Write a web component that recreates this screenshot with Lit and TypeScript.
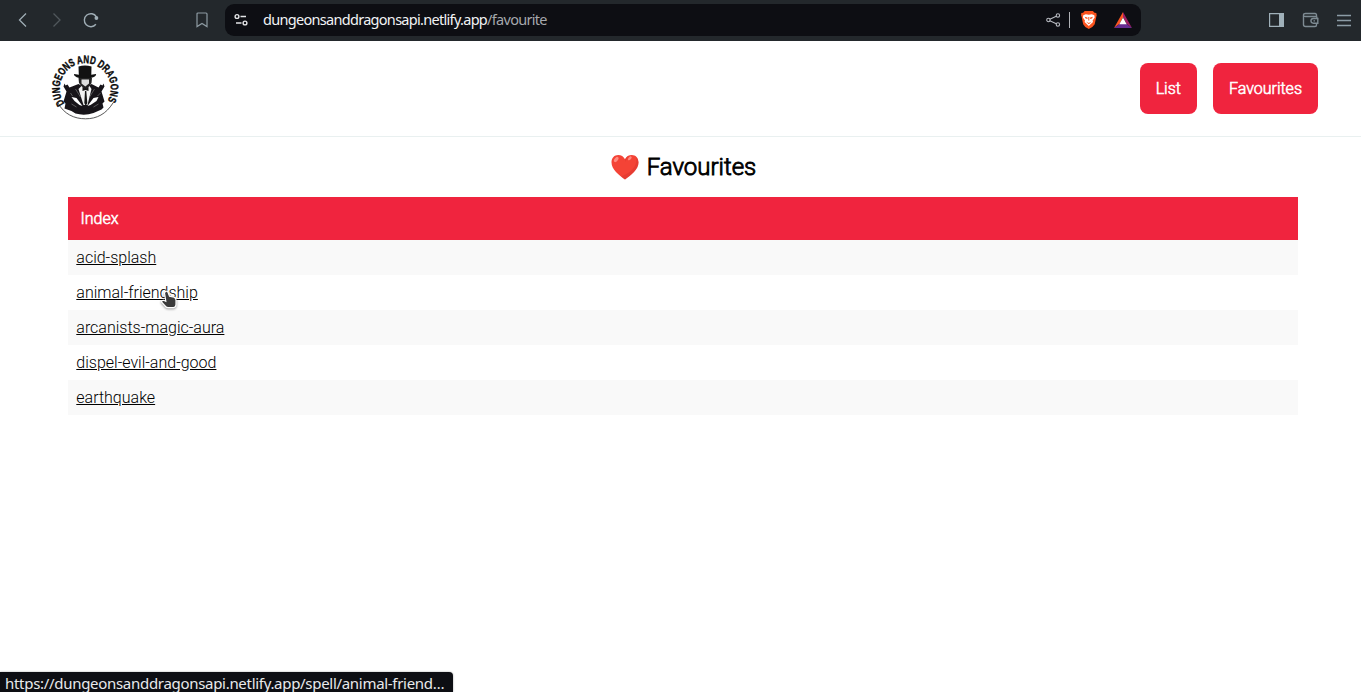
import { LitElement, html, css } from "lit";
import { customElement, property } from "lit/decorators.js";

@customElement("browser-bar")
class BrowserBar extends LitElement {
  static styles = css`
    :host { display: block; }
    .bar { height: 41px; box-sizing: border-box; background: #23282c; display: flex; align-items: center; padding: 0 9px 1px 15px; color: #9fadb5; }
    svg { display: block; flex: none; overflow: visible; }
    .nav { display: flex; gap: 18px; flex: none; }
    .mark { margin-left: 94px; }
    .address { margin-left: 15px; width: 916px; height: 32px; box-sizing: border-box; border-radius: 9px; background: #0d0e13; display: flex; align-items: center; padding: 0 9px 0 8px; flex: none; }
    .url { margin-left: 14px; font: 14.500px/20px "Noto Sans", sans-serif; letter-spacing: -0.7px; color: #f2f3f5; white-space: nowrap; flex: 1; padding-bottom: 2px; }
    .path { color: #a5a8ad; }
    .rule { width: 1px; height: 16px; background: #b0b2b6; margin: 0 11px 0 8px; }
    .vpn { margin-left: 16px; }
    .tools { display: flex; margin-left: auto; gap: 18px; }
  `;
  render() {
    return html`<div class="bar">
      <div class="nav">
        <svg width="16" height="16" fill="none" stroke="#9fadb5" stroke-width="1.3"><path d="M11 1.500 4.500 8l6.500 6.500"/></svg>
        <svg width="16" height="16" fill="none" stroke="#50575c" stroke-width="1.3"><path d="m4.500 1.500 6.500 6.500-6.500 6.500"/></svg>
        <svg width="17" height="16" fill="none" stroke="#9fadb5" stroke-width="1.4"><path d="M12.900 12.300a6.500 6.500 0 1 1 .5-7.500"/><circle cx="13.400" cy="6" r="1.900" fill="#9fadb5" stroke="none"/></svg>
      </div>
      <svg class="mark" width="16" height="16" fill="none" stroke="#8d9aa2" stroke-width="1.2"><path d="M4 1h8q1 0 1 1v12.600L8 11.400l-5 3.200V2q0-1 1-1Z"/></svg>
      <div class="address">
        <svg width="16" height="16" fill="none" stroke="#e4e5e7" stroke-width="1.400"><circle cx="4" cy="4.500" r="1.900"/><path d="M7.500 4.500H13M3 11h5.500"/><circle cx="12" cy="11" r="1.900"/></svg>
        <div class="url">dungeonsanddragonsapi.netlify.app<span class="path">/favourite</span></div>
        <svg width="16" height="16" fill="none" stroke="#b7bac0" stroke-width="1.100"><path d="m4.800 7.200 6.500-3M4.800 8.800l6.500 3"/><circle cx="3.400" cy="8" r="1.700"/><circle cx="12.900" cy="3.500" r="1.700"/><circle cx="12.900" cy="12.500" r="1.700"/></svg>
        <span class="rule"></span>
        <svg width="17" height="18" viewBox="0.7 0 17 18"><path d="m4.400 0-1.600 1.700L1 2 .8 4.400l.5 1.300 1.600 7.500L5 15.900 8.500 18l3.500-2.100 2.400-2.700L16 5.700l.4-1.300L16 2l-1.800-.3L12.600 0Z" fill="#fb541f"/><path d="M5.500 3.200 3 4.200 2.600 6.500l2.100 3-.4 1.600 4.200 3.900 4.200-3.900-.4-1.600 2.100-3L14 4.200l-2.500-1-3 .6Z" fill="#fff"/><path d="m4.400 5.700 2.700.8.2 1.600-2-.5ZM12.600 5.700l-2.700.8-.2 1.600 2-.5ZM5.700 10.500l2.800 1.500 2.800-1.500-2.800 2.800ZM8 6h1v3.500H8Z" fill="#fb541f"/></svg>
        <svg class="vpn" width="18" height="16"><path d="M9 0v5.300L5.400 12 0 16Z" fill="#fb5522"/><path d="m9 0 9 16-5.300-4L9 5.300Z" fill="#9e1f63"/><path d="M0 16 5.400 12h7.300L18 16Z" fill="#662d91"/><path d="m9 5.500 3.700 6.700H5.300Z" fill="#fff"/></svg>
      </div>
      <div class="tools">
        <svg width="16" height="16"><path d="M1.600 1.600h13.800v12.800H1.600Z" fill="none" stroke="#9fb0b9" stroke-width="1.200"/><path d="M11 1h5v14h-5Z" fill="#9fb0b9"/></svg>
        <svg width="16" height="16" fill="none" stroke="#7e8b93" stroke-width="1.400"><path d="M14.500 4.500V3q0-1.500-1.500-1.500H3.500Q1.500 1.500 1.500 3v9.500q0 2 2 2H13q1.500 0 1.500-1.500v-1.800M1.500 3.200q0 1.300 2 1.300H14q1 0 1 1.500v.5M15.800 6.500h-4.500a2.300 2.300 0 0 0 0 4.700h4.500ZM11.500 8.900H13"/></svg>
        <svg width="16" height="16" stroke="#8c9ca6" stroke-width="1.300"><path d="M1 3.500h14M1 8.500h14M1 13.500h14"/></svg>
      </div>
    </div>`;
  }
}

@customElement("guild-logo")
class GuildLogo extends LitElement {
  static styles = css`
    :host { display: block; }
    svg { display: block; overflow: visible; }
    .name { font: 800 11px "Liberation Sans", sans-serif; fill: #080808; stroke: #080808; stroke-width: 0.4px; }
  `;
  render() {
    return html`<svg width="80" height="76" viewBox="0 0 80 76">
      <path d="M13 52C19 63 29 67.800 40.500 67.800S61 63 68 52" fill="none" stroke="#444" stroke-width=".9"/>
      <path id="arc" d="M19.500 52.500A25.500 25.500 0 1 1 61 52.500" fill="none"/>
      <text class="name"><textPath href="#arc" textLength="108" lengthAdjust="spacingAndGlyphs">DUNGEONS AND DRAGONS</textPath></text>
      <g transform="translate(-.5 -3)">
      <path d="M34 18.500q6.500-1.800 13 0l-.2 8.300 4.600-.8q1 1.600-2.700 3.200-8 3-16.500 0-3.500-1.700-2.500-3.200l4.600.8Z" fill="#111"/>
      <path d="m34 30 .5 5 3 4 3 1.500 4-1.500 2.500-4 .5-5Z" fill="#222"/>
      <path d="M37 31.500h7.500v4l-3.700 3-3.800-3Z" fill="#ddd"/>
      <path d="m34 36-9 3.500-2-3-2 1-1-2-1 3 3 5-3 10 2 2-1 5q7 2 11 5 9 2.500 18-.5l8-3.500 2-2-1-4 2-2-3-10 3-5-1-3-1 2-2-1-2 3-7-3.500-6 4Z" fill="#171419"/>
      <path d="m37 38 4 4 4-4 2 3-4 16h-4l-5-16Z" fill="#f1f1f1"/>
      <path d="m38 39 3 2 3-2v4l-3-1-3 1ZM40.500 43h1.300l1 12-1.500 3-1.500-3Z" fill="#151515"/>
      <path d="m27 49 5 1 6 8-3-1-5-4ZM54 49l-5 1-6 8 3-1 6-4Z" fill="#fff"/>
      <path d="m31 41 5 8M50 41l-5 8M26 45l2 3M56 45l-3 3M27 56l5 3M54 56l-5 3" stroke="#888" stroke-width=".6"/>
      </g>
    </svg>`;
  }
}

@customElement("app-root")
class AppRoot extends LitElement {
  @property({ attribute: false }) spells = ["acid-splash", "animal-friendship", "arcanists-magic-aura", "dispel-evil-and-good", "earthquake"];

  static styles = css`
    :host { display: flex; flex-direction: column; height: 692px; position: relative; overflow: hidden; background: #fff; color: #000; font: 300 16px/19px Roboto, sans-serif; }
    .head { height: 96px; box-sizing: border-box; border-bottom: 1px solid #e9f0f0; display: flex; justify-content: space-between; align-items: center; padding: 0 43px 0 45px; }
    .links { display: flex; gap: 16px; }
    .link { box-sizing: border-box; height: 51px; padding: 16px; border-radius: 8px; background: #f0243e; color: #fff; text-decoration: none; -webkit-text-stroke: 0.55px #fff; }
    .title { margin: 0; height: 60px; box-sizing: border-box; display: flex; align-items: center; justify-content: center; gap: 8px; padding: 0 0 1px 6px; font: 300 24px/30px Roboto, sans-serif; -webkit-text-stroke: 0.9px #000; }
    .heart { display: block; }
    .table { margin: 0 63px 0 68px; }
    .index { box-sizing: border-box; height: 43px; padding: 12px 12.500px; background: #f0243e; color: #fff; -webkit-text-stroke: 0.55px #fff; }
    .row { box-sizing: border-box; height: 35px; padding: 8px 8.300px; }
    .row:nth-child(even) { background: #f9f9f9; }
    .row a { color: #000; text-decoration: underline; }
    .pointer { position: absolute; left: 160px; top: 290px; filter: drop-shadow(0 1px 1px #0006); }
    .status { position: absolute; left: 0; bottom: 0; width: 453px; height: 20px; box-sizing: border-box; padding-left: 5px; border-radius: 0 4px 0 0; background: #0d0e13; color: #e8e9eb; font: 15px/22px "Noto Sans", sans-serif; letter-spacing: -0.3px; white-space: nowrap; box-shadow: 0 0 2px #0006; }
  `;

  render() {
    return html`
      <browser-bar></browser-bar>
      <header class="head">
        <guild-logo></guild-logo>
        <nav class="links"><a class="link" href="#list">List</a><a class="link" href="#favourites">Favourites</a></nav>
      </header>
      <h1 class="title">
        <svg class="heart" width="28" height="26" viewBox="0 0 28 26"><path d="M14 25.500C8 21 .5 15.500.5 8.200.5 3.800 3.500 1 7.200 1c3 0 5.400 1.500 6.800 4.300C15.400 2.500 17.800 1 20.800 1c3.700 0 6.700 2.800 6.700 7.200 0 7.300-7.500 12.800-13.500 17.300Z" fill="#f44336"/><path d="M25.200 3q2.300 2.200 2.300 5.500c0 7-7.500 12.600-13.500 17q-2-1.400-4-3.100C20 19 27 12 25.200 3ZM14 5.300q1.300-2.600 3.700-3.700-2.200 2.200-3.100 6.200Z" fill="#d8362d" opacity=".5"/><ellipse cx="5.200" cy="5.500" rx="1.700" ry="3" transform="rotate(38 5.200 5.500)" fill="#ff8a80"/><ellipse cx="18.800" cy="4.300" rx="1.300" ry="2.300" transform="rotate(45 18.800 4.300)" fill="#ff8a80"/></svg>
        <span>Favourites</span>
      </h1>
      <div class="table">
        <div class="index">Index</div>
        ${this.spells.map((s) => html`<div class="row"><a href="#${s}">${s}</a></div>`)}
      </div>
      <svg class="pointer" width="18" height="20"><path d="M5.500 1.500q1.500-.8 2.500.8l1.500 4 4.500.8q2 .7 2 3v4.500q0 2.800-2.500 3H8q-2 0-3.200-2L1.500 12q0-1.800 2-1.700l2.300 1L4.500 3Z" fill="#3b3b3b" stroke="#fff" stroke-width="1.200"/></svg>
      <div class="status">https://dungeonsanddragonsapi.netlify.app/spell/animal-friend…</div>
    `;
  }
}
